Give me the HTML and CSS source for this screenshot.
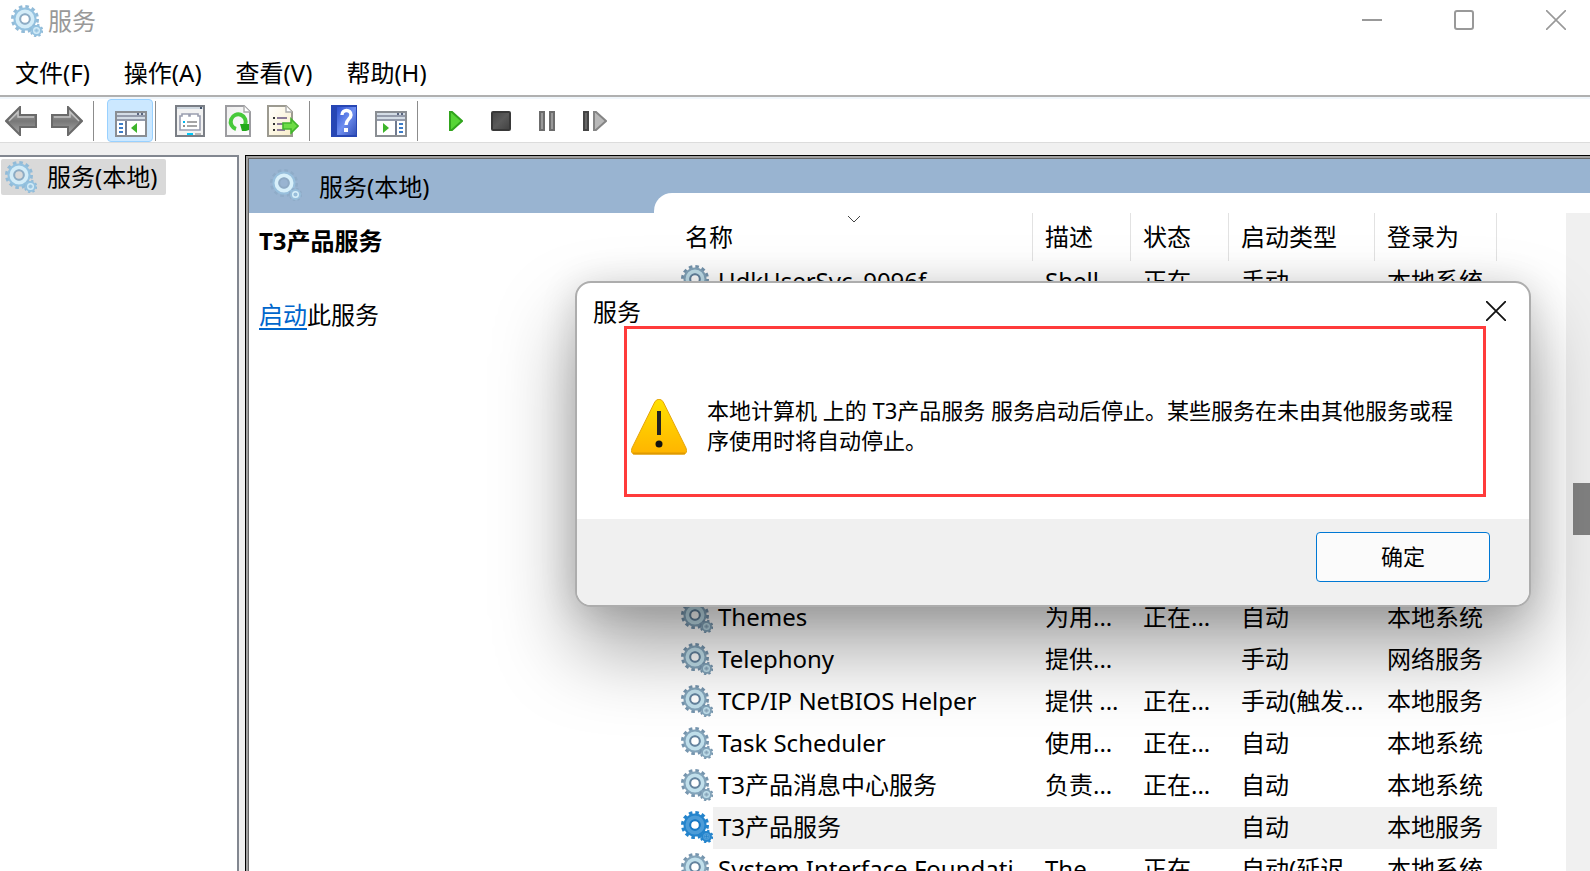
FILE: index.html
```html
<!DOCTYPE html>
<html lang="zh-CN">
<head>
<meta charset="utf-8">
<title>服务</title>
<link rel="stylesheet" href="styles.css">
</head>
<body>
<svg class="defs" aria-hidden="true">
  <defs>
    <linearGradient id="metal" x1="0" y1="0" x2="0" y2="1"><stop offset="0" stop-color="#b4b4b4"/><stop offset=".5" stop-color="#777"/><stop offset="1" stop-color="#a8a8a8"/></linearGradient>
    <linearGradient id="paper" x1="0" y1="0" x2="1" y2="1"><stop offset="0" stop-color="#eee"/><stop offset="1" stop-color="#fff"/></linearGradient>
    <linearGradient id="cream" x1="0" y1="0" x2="1" y2="1"><stop offset="0" stop-color="#fff"/><stop offset="1" stop-color="#f8edc8"/></linearGradient>
    <linearGradient id="book" x1="0" y1="0" x2="1" y2="1"><stop offset="0" stop-color="#2c4fd0"/><stop offset=".5" stop-color="#6f8ff0"/><stop offset="1" stop-color="#3350b8"/></linearGradient>
    <linearGradient id="amber" x1="0" y1="0" x2="0" y2="1"><stop offset="0" stop-color="#ffe100"/><stop offset="1" stop-color="#ffb400"/></linearGradient>
    <linearGradient id="dark" x1="0" y1="0" x2="1" y2="1"><stop offset="0" stop-color="#444"/><stop offset=".5" stop-color="#5a5a5a"/><stop offset="1" stop-color="#404040"/></linearGradient>
    <symbol id="gear" viewBox="0 0 32 32">
      <circle class="g-teeth" cx="14" cy="14" r="12" fill="none" stroke-width="4" stroke-dasharray="3.4 2.88"/>
      <circle class="g-edge" cx="14" cy="14" r="8" fill="none" stroke-width="7"/>
      <circle class="g-ring" cx="14" cy="14" r="7.5" fill="none" stroke-width="4"/>
      <circle class="g-inner" cx="14" cy="14" r="4.8" fill="none" stroke-width="2"/>
      <circle class="g-teeth" cx="25.5" cy="25.5" r="5.4" fill="none" stroke-width="2.6" stroke-dasharray="2.2 2.04"/>
      <circle class="g-edge" cx="25.500" cy="25.500" r="3.4" fill="none" stroke-width="4"/>
      <circle class="g-ring" cx="25.500" cy="25.500" r="2.800" fill="none" stroke-width="1.4"/>
      <circle class="g-hub" cx="25.500" cy="25.500" r="1.4"/>
    </symbol>
    <symbol id="arrow" viewBox="0 0 32 30">
      <path d="M1 15 15 1V9H31V21H15V29Z" fill="url(#metal)" stroke="#6a6a6a" stroke-width="2"/>
      <path d="M4 15 13 6V11H29" fill="none" stroke="#c4c4c4" stroke-width="1.4"/>
    </symbol>
  </defs>
</svg>

<div class="window">
  <header class="titlebar">
    <svg class="gear pale"><use href="#gear"/></svg>
    <h1 class="app-title">服务</h1>
    <div class="caption-buttons">
      <button class="caption" aria-label="最小化"><svg width="20" height="20"><path d="M0 10H20" stroke="#999" stroke-width="2"/></svg></button>
      <button class="caption" aria-label="最大化"><svg width="20" height="20"><rect x="1" y="1" width="18" height="18" rx="2" fill="none" stroke="#999" stroke-width="2"/></svg></button>
      <button class="caption" aria-label="关闭"><svg width="20" height="20"><path d="M0 0 20 20M20 0 0 20" stroke="#999" stroke-width="1.6"/></svg></button>
    </div>
  </header>

  <nav class="menubar">
    <button>文件(F)</button>
    <button>操作(A)</button>
    <button>查看(V)</button>
    <button>帮助(H)</button>
  </nav>

  <div class="toolbar">
    <div class="group nav-group">
      <button class="tool" aria-label="后退"><svg width="32" height="30"><use href="#arrow"/></svg></button>
      <button class="tool" aria-label="前进"><svg class="flip" width="32" height="30"><use href="#arrow"/></svg></button>
    </div>
    <div class="group tree-group">
      <button class="tool active" aria-label="显示/隐藏控制台树">
        <svg class="low" width="32" height="26" viewBox="0 0 32 26"><rect x="1" y="1" width="30" height="24" fill="#fff" stroke="#8a8e93" stroke-width="2"/><path d="M2 3H30M2 7H30" stroke="#d4dde6" stroke-width="2"/><path d="M2 5H30M2 9H30" stroke="#717b90" stroke-width="1.6"/><path d="M22 3h2M26 3h2" stroke="#5a6680" stroke-width="2"/><path d="M11 10V24" stroke="#717b90" stroke-width="2"/><path d="M4 13h4M4 17h4M4 21h4" stroke="#3c7cc8" stroke-width="2"/><path d="M22 12V22L16 17Z" fill="#3db42b"/></svg>
      </button>
    </div>
    <div class="group page-group">
      <button class="tool" aria-label="属性"><svg width="30" height="32" viewBox="0 0 30 32"><rect x="1" y="1" width="28" height="30" fill="#f2f2f2" stroke="#7a7e85" stroke-width="2"/><path d="M2 3H28" stroke="#cfd8e0" stroke-width="2"/><path d="M25 3h2" stroke="#44546c" stroke-width="2"/><path d="M5 25V11H7V9H14V11H15V9H23V11H25V25Z" fill="#fff" stroke="#9a9eb0" stroke-width="1.6"/><path d="M8 17h2" stroke="#00b8f0" stroke-width="2"/><path d="M12 17h10M12 21h10" stroke="#888" stroke-width="1.4"/><path d="M8 21h2" stroke="#666" stroke-width="1.4"/><path d="M12 29h6" stroke="#00c8f8" stroke-width="2"/><path d="M20 29h6" stroke="#b8b8b8" stroke-width="2"/></svg></button>
      <button class="tool" aria-label="刷新"><svg width="26" height="32" viewBox="0 0 26 32"><path d="M1 1H19L25 7V31H1Z" fill="url(#paper)" stroke="#9c9ca0" stroke-width="2"/><path d="M19 1V7H25" fill="#fff" stroke="#aaa" stroke-width="1.4"/><path d="M11 24A7.500 7.500 0 1 1 20 20" fill="none" stroke="#46c93a" stroke-width="4"/><path d="M15 19H24V25L21 26H17Z" fill="#23a91b"/></svg></button>
      <button class="tool" aria-label="导出列表"><svg width="32" height="32" viewBox="0 0 32 32"><path d="M1 1H19L25 7V31H1Z" fill="url(#cream)" stroke="#9c9a90" stroke-width="2"/><path d="M19 1V7H25" fill="#fff" stroke="#aaa" stroke-width="1.4"/><path d="M6 13h2M6 19h2M6 25h2" stroke="#333" stroke-width="2"/><path d="M10 13h10M10 19h8M10 25h8" stroke="#8b7b98" stroke-width="1.8"/><path d="M16 18H24V14L31 21 24 28V24H16Z" fill="#6ddc45" stroke="#42b52c" stroke-width="1.6"/></svg></button>
    </div>
    <div class="group help-group">
      <button class="tool" aria-label="帮助"><svg width="26" height="32" viewBox="0 0 26 32"><rect width="26" height="32" fill="#2746b4"/><rect x="6" y="2" width="19" height="28" fill="url(#book)"/><path d="M11 10C11 4 20 4 20 10 20 14 15 14 15 20" fill="none" stroke="#fff" stroke-width="3.4"/><rect x="13" y="23" width="4" height="4" fill="#fff"/></svg></button>
      <button class="tool" aria-label="显示/隐藏操作窗格"><svg class="low" width="32" height="26" viewBox="0 0 32 26"><rect x="1" y="1" width="30" height="24" fill="#fff" stroke="#8a8e93" stroke-width="2"/><path d="M2 3H30M2 7H30" stroke="#d4dde6" stroke-width="2"/><path d="M2 5H30M2 9H30" stroke="#717b90" stroke-width="1.6"/><path d="M22 3h2M26 3h2" stroke="#5a6680" stroke-width="2"/><path d="M21 10V24" stroke="#717b90" stroke-width="2"/><path d="M24 13h4M24 17h4M24 21h4" stroke="#3c7cc8" stroke-width="2"/><path d="M8 12V22L14 17Z" fill="#3db42b"/></svg></button>
    </div>
    <div class="group run-group">
      <button class="tool" aria-label="启动服务"><svg width="14" height="20"><path d="M1 1H3L13 10 3 19H1Z" fill="#56d536" stroke="#31a41d" stroke-width="2"/></svg></button>
      <button class="tool" aria-label="停止服务"><svg width="20" height="20"><rect x="1" y="1" width="18" height="18" rx="1" fill="url(#dark)" stroke="#383838" stroke-width="2"/></svg></button>
      <button class="tool" aria-label="暂停服务"><svg width="16" height="20"><path d="M1 1H5V19H1ZM11 1H15V19H11Z" fill="#999" stroke="#6c6c6c" stroke-width="2"/></svg></button>
      <button class="tool" aria-label="重新启动服务"><svg width="24" height="20"><path d="M1 1H5V19H1Z" fill="#666" stroke="#444" stroke-width="2"/><path d="M11 1H13L23 10 13 19H11Z" fill="#b9b9b9" stroke="#858585" stroke-width="2"/></svg></button>
    </div>
  </div>

  <main class="workspace">
    <aside class="tree">
      <a class="tree-item" href="#services"><svg class="gear pale"><use href="#gear"/></svg>服务(本地)</a>
    </aside>

    <section class="pane" id="services">
      <div class="details">
        <h2 class="pane-title"><svg class="gear ghost"><use href="#gear"/></svg>服务(本地)</h2>
        <div class="details-body">
          <h3>T3产品服务</h3>
          <p><a href="#start">启动</a>此服务</p>
        </div>
      </div>
      <div class="list">
        <div class="table-wrap">
          <table>
            <colgroup><col class="c-name"><col class="c-short"><col class="c-short"><col class="c-start"><col class="c-logon"></colgroup>
            <thead>
              <tr><th>名称<svg class="sort" width="14" height="8"><path d="M1 1 7 7 13 1" fill="none" stroke="#444" stroke-width="1"/></svg></th><th>描述</th><th>状态</th><th>启动类型</th><th>登录为</th></tr>
            </thead>
            <tbody>
              <tr><td><div class="name"><svg class="gear"><use href="#gear"/></svg><span>UdkUserSvc_9096f</span></div></td><td>Shell</td><td>正在</td><td>手动</td><td>本地系统</td></tr>
              <tr class="covered"><td colspan="5"></td></tr>
              <tr><td><div class="name"><svg class="gear"><use href="#gear"/></svg><span>Themes</span></div></td><td>为用...</td><td>正在...</td><td>自动</td><td>本地系统</td></tr>
              <tr><td><div class="name"><svg class="gear"><use href="#gear"/></svg><span>Telephony</span></div></td><td>提供...</td><td></td><td>手动</td><td>网络服务</td></tr>
              <tr><td><div class="name"><svg class="gear"><use href="#gear"/></svg><span>TCP/IP NetBIOS Helper</span></div></td><td>提供 ...</td><td>正在...</td><td>手动(触发...</td><td>本地服务</td></tr>
              <tr><td><div class="name"><svg class="gear"><use href="#gear"/></svg><span>Task Scheduler</span></div></td><td>使用...</td><td>正在...</td><td>自动</td><td>本地系统</td></tr>
              <tr><td><div class="name"><svg class="gear"><use href="#gear"/></svg><span>T3产品消息中心服务</span></div></td><td>负责...</td><td>正在...</td><td>自动</td><td>本地系统</td></tr>
              <tr class="selected"><td><div class="name"><svg class="gear picked"><use href="#gear"/></svg><span>T3产品服务</span></div></td><td></td><td></td><td>自动</td><td>本地服务</td></tr>
              <tr><td><div class="name"><svg class="gear"><use href="#gear"/></svg><span>System Interface Foundati...</span></div></td><td>The ...</td><td>正在...</td><td>自动(延迟...</td><td>本地系统</td></tr>
            </tbody>
          </table>
        </div>
        <div class="scrollbar"><div class="thumb"></div></div>
      </div>
    </section>
  </main>

  <div class="dialog" role="alertdialog" aria-labelledby="dlg-title" aria-describedby="dlg-text">
    <div class="dialog-head">
      <h2 id="dlg-title">服务</h2>
      <button class="dialog-close" aria-label="关闭"><svg width="20" height="20"><path d="M0 0 20 20M20 0 0 20" stroke="#111" stroke-width="1.8"/></svg></button>
    </div>
    <div class="message">
      <svg class="warning" width="56" height="56" viewBox="0 0 56 56"><path d="M24 2.500Q28 -2 32 2.500L55 49Q57 55 52 55H4Q-1 55 1 49Z" fill="url(#amber)" stroke="#e5a50a" stroke-width="1"/><path d="M2 54.500H54" stroke="#e09a00" stroke-width="2"/><rect x="26" y="12" width="4" height="24" fill="#222"/><circle cx="28" cy="45" r="3.500" fill="#111"/></svg>
      <p id="dlg-text">本地计算机 上的 T3产品服务 服务启动后停止。某些服务在未由其他服务或程序使用时将自动停止。</p>
    </div>
    <div class="dialog-foot"><button class="ok">确定</button></div>
  </div>
</div>
</body>
</html>
```
FILE: styles.css
```css
* { box-sizing: border-box; }

body {
  margin: 0;
  background: #fff;
  color: #000;
  font: 24px/32px "Noto Sans", "Noto Sans CJK SC", sans-serif;
}

h1, h2, h3, p { margin: 0; font-size: inherit; font-weight: 400; }
button { margin: 0; padding: 0; border: 0; background: none; color: inherit; font: inherit; }
svg { display: block; flex: none; }
.defs { position: absolute; width: 0; height: 0; }

.window {
  position: relative;
  display: flex;
  flex-direction: column;
  height: 100vh;
  overflow: hidden;
}

/* gear icon and its colour variants */
.gear {
  width: 32px;
  height: 32px;
  --teeth: #7695ae;
  --edge: #83a4ba;
  --ring: #c0dfeb;
  --inner: #64839e;
}
.gear.pale { --teeth: #92bbd8; --edge: #94c2e0; --ring: #d3ecf8; --inner: #8eacc4; }
.gear.ghost { --teeth: #8facc8; --edge: #98bfdc; --ring: #d8f0fa; --inner: #8faac4; }
.gear.picked { --teeth: #2484cc; --edge: #2484cc; --ring: #4c9cd8; --inner: #1878c4; }
.g-teeth { stroke: var(--teeth); }
.g-edge { stroke: var(--edge); }
.g-ring { stroke: var(--ring); }
.g-inner { stroke: var(--inner); }
.g-hub { fill: var(--edge); }

.titlebar {
  display: flex;
  align-items: center;
  gap: 5px;
  height: 40px;
  padding: 1px 0 0 11px;
}
.app-title { color: #999; }
.caption-buttons { display: flex; gap: 72px; margin: -2px 0 0 auto; padding-right: 24px; }

.menubar {
  display: flex;
  align-items: center;
  gap: 34px;
  height: 57px;
  padding: 10px 15px 0;
  border-bottom: 2px solid #b0b0b0;
}

.toolbar {
  display: flex;
  height: 46px;
  border-top: 2px solid #f0f6fb;
  border-bottom: 1px solid #dcdcdc;
}
.group { display: flex; align-items: center; margin: 2px 0 1px; border-right: 1px solid #8c8c8c; }
.group:last-child { border-right: 0; }
.tool .low { margin-top: 6px; }
.flip { transform: scaleX(-1); }
.nav-group { gap: 14px; padding: 0 10px 0 5px; }
.tree-group { padding: 0 2px 0 13px; }
.tool.active {
  height: 43px;
  margin: -2px 0 -1px;
  padding: 0 5px 0 7px;
  border: 1px solid #99d1ff;
  border-radius: 4px;
  background: #cce8ff;
}
.page-group { padding: 0 10px 0 19px; gap: 16px; }
.page-group .tool:first-child { margin-right: 4px; }
.help-group { gap: 18px; padding: 0 10px 0 21px; }
.run-group { gap: 28px; padding-left: 31px; }

.workspace {
  display: flex;
  flex: 1;
  gap: 6px;
  min-height: 0;
  padding-top: 12px;
  background: #f0f0f0;
}
.tree {
  flex: none;
  width: 239px;
  padding: 2px 1px;
  border-top: 2px solid #828790;
  border-right: 2px solid #828790;
  background: #fff;
}
.tree-item {
  display: inline-flex;
  align-items: center;
  gap: 10px;
  height: 36px;
  padding: 0 9px 0 4px;
  border-radius: 2px;
  background: #d9d9d9;
  color: #000;
  text-decoration: none;
}

.pane {
  display: flex;
  flex: 1;
  min-width: 0;
  border: solid #666;
  border-width: 1px 0 0 1px;
  outline: 2px solid #a0a0a0;
  box-shadow: 0 0 0 3px #000;
  margin: 3px 0 0 3px;
  background: #99b4d1;
}
.details { display: flex; flex: none; flex-direction: column; width: 405px; }
.pane-title { display: flex; align-items: center; gap: 17px; height: 54px; padding: 2px 0 0 21px; }
.pane-title .gear { margin-top: -4px; }
.details-body { flex: 1; padding: 12px 10px; background: #fff; }
.details-body h3 { font-weight: 700; }
.details-body p { margin-top: 42px; }
.details-body a { color: #0066cc; text-decoration-thickness: 2px; text-underline-offset: 4px; }

.list {
  display: flex;
  flex: 1;
  min-width: 0;
  min-height: 0;
  margin-top: 34px;
  padding: 20px 0 0 19px;
  border-top-left-radius: 18px;
  background: #fff;
}
.table-wrap { flex: 1; min-width: 0; overflow: hidden; }
table { width: 824px; border-collapse: separate; border-spacing: 0; table-layout: fixed; }
.c-name { width: 360px; }
.c-short { width: 98px; }
.c-start { width: 146px; }
.c-logon { width: 122px; }
th, td { padding: 0 0 0 12px; font-weight: 400; text-align: left; white-space: nowrap; }
th { position: relative; height: 48px; border-right: 1px solid #e2e2e2; }
td { height: 42px; padding-bottom: 2px; }
.sort { position: absolute; top: 2px; left: 174px; }
td:first-child { padding: 0 0 0 8px; }
.name { display: flex; align-items: center; height: 42px; }
.name .gear { margin-top: -2px; }
.name span { flex: 1; height: 42px; padding-left: 5px; line-height: 40px; }
.covered td { height: 294px; }
.selected .name span, .selected td:not(:first-child) { background: #f0f0f0; }

.scrollbar { flex: none; width: 24px; padding: 270px 0 0 7px; background: #f0f0f0; }
.thumb { height: 52px; background: #828282; }

.dialog {
  position: absolute;
  top: 281px;
  left: 575px;
  width: 956px;
  overflow: hidden;
  border: 2px solid #adadad;
  border-radius: 16px;
  background: #fff;
  box-shadow: 0 42px 80px rgba(0, 0, 0, .36), 0 4px 36px rgba(0, 0, 0, .14);
}
.dialog-head { display: flex; justify-content: space-between; height: 43px; padding: 13px 23px 0 16px; }
.dialog-close { height: 32px; }
.dialog-close svg { margin-top: -2px; }
.message {
  display: flex;
  align-items: center;
  gap: 20px;
  height: 171px;
  margin: 0 43px 22px 47px;
  padding: 26px 24px 0 4px;
  border: 3px solid #ff3b3b;
  font-size: 22px;
  line-height: 30px;
}
.warning { margin-top: 4px; }
.dialog-foot { display: flex; justify-content: flex-end; padding: 13px 39px 23px; background: #f0f0f0; }
.ok {
  width: 174px;
  height: 50px;
  padding-bottom: 2px;
  border: 1px solid #0078d4;
  border-radius: 4px;
  background: #fbfbfb;
  font-size: 22px;
}
```
